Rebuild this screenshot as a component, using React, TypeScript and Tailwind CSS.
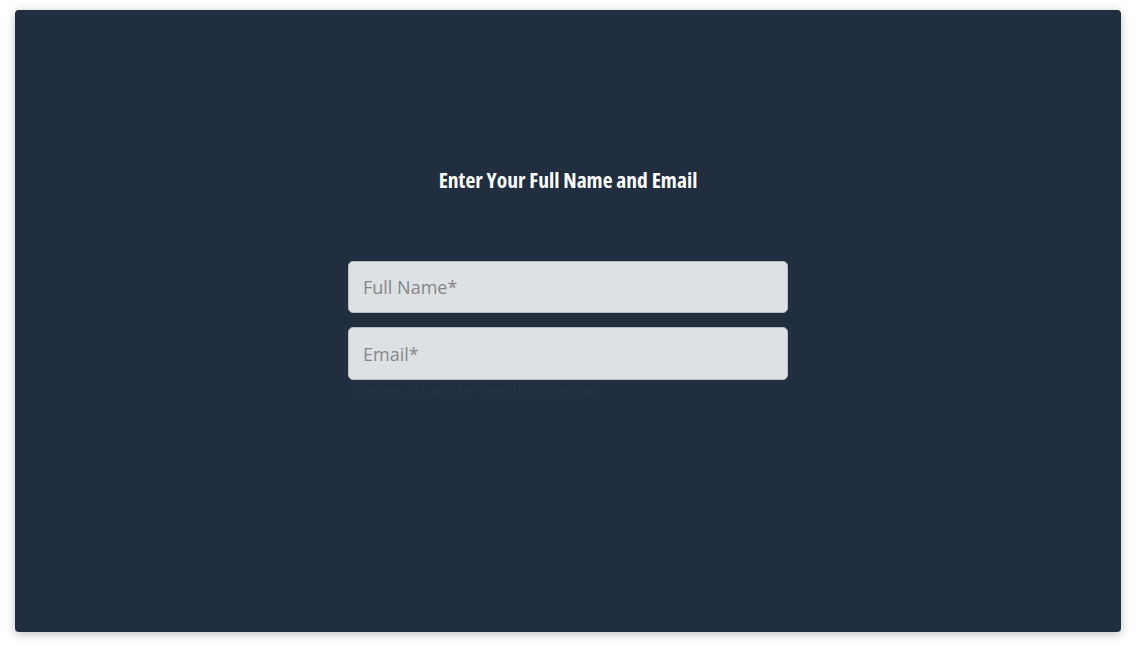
export default function App() {
  return (
    <div className="w-[1136px] h-[653px] bg-white pt-[10px] pl-[15px]">
      <div className="w-[1106px] h-[622px] bg-[#202e3f] rounded-[4px] shadow-[0_2px_10px_rgba(0,0,0,0.25)] flex flex-col items-center">
        <h1
          className="mt-[156px] text-white text-[21.5px] font-bold leading-[28px]"
          style={{ fontFamily: '"Open Sans", sans-serif', fontStretch: "75%" }}
        >
          Enter Your Full Name and Email
        </h1>
        <div className="mt-[67px] w-[440px] flex flex-col gap-[14px]" style={{ fontFamily: '"Open Sans", sans-serif' }}>
          <input
            placeholder="Full Name*"
            className="w-full h-[52px] rounded-[5px] bg-[#dee1e4] border border-[#b9bdc2] px-[14px] text-[18px] text-gray-700 placeholder:text-[#858788] outline-none"
          />
          <div className="flex flex-col">
            <input
              placeholder="Email*"
              className="w-full h-[53px] rounded-[5px] bg-[#dee1e4] border border-[#b9bdc2] px-[14px] text-[18px] text-gray-700 placeholder:text-[#858788] outline-none"
            />
            <p className="mt-[0px] pl-[2px] text-[15px] leading-[20px] text-[#2a3441]">The results will be sent to this email.</p>
          </div>
        </div>
      </div>
    </div>
  );
}
